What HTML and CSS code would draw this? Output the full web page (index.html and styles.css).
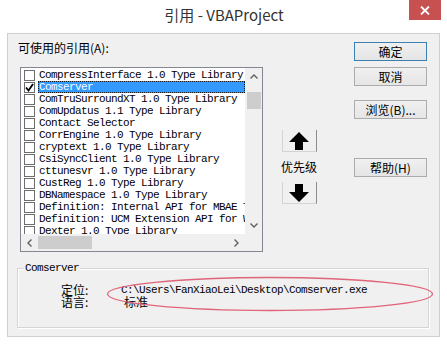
FILE: index.html
```html
<!DOCTYPE html>
<html lang="zh-CN">
<head>
    <meta charset="UTF-8">
    <title>引用 - VBAProject</title>
    <link rel="stylesheet" href="styles.css">
</head>
<body>

<div class="window">
    <div class="titlebar">
        <span></span>
        <div class="title">引用 - VBAProject</div>
        <div class="close">
            <svg width="10" height="9" viewBox="0 0 10 9"><path d="M1 0.5 L9 8.5 M9 0.5 L1 8.5" stroke="#fff" stroke-width="1.8"/></svg>
        </div>
    </div>

    <div class="client">
        <div class="top">
            <div class="refs">
                <div class="label">可使用的引用(A):</div>
                <div class="listbox">
                    <div class="list-body">
                        <div class="rows">
                            <div class="row"><span class="check"></span><span class="name">CompressInterface 1.0 Type Library</span></div>
                            <div class="row selected"><span class="check checked"><svg width="9" height="9" viewBox="0 0 9 9"><path d="M1 4.5 L3.5 7.5 L8 1" fill="none" stroke="#000" stroke-width="1.8"/></svg></span><span class="name">Comserver</span></div>
                            <div class="row"><span class="check"></span><span class="name">ComTruSurroundXT 1.0 Type Library</span></div>
                            <div class="row"><span class="check"></span><span class="name">ComUpdatus 1.1 Type Library</span></div>
                            <div class="row"><span class="check"></span><span class="name">Contact Selector</span></div>
                            <div class="row"><span class="check"></span><span class="name">CorrEngine 1.0 Type Library</span></div>
                            <div class="row"><span class="check"></span><span class="name">cryptext 1.0 Type Library</span></div>
                            <div class="row"><span class="check"></span><span class="name">CsiSyncClient 1.0 Type Library</span></div>
                            <div class="row"><span class="check"></span><span class="name">cttunesvr 1.0 Type Library</span></div>
                            <div class="row"><span class="check"></span><span class="name">CustReg 1.0 Type Library</span></div>
                            <div class="row"><span class="check"></span><span class="name">DBNamespace 1.0 Type Library</span></div>
                            <div class="row"><span class="check"></span><span class="name">Definition: Internal API for MBAE Type Library</span></div>
                            <div class="row"><span class="check"></span><span class="name">Definition: UCM Extension API for Windows</span></div>
                            <div class="row"><span class="check"></span><span class="name">Dexter 1.0 Type Library</span></div>
                        </div>
                        <div class="vscroll">
                            <svg class="chev" width="8" height="5" viewBox="0 0 8 5"><path d="M0.5 4.5 L4 1 L7.5 4.5" fill="none" stroke="#606060" stroke-width="1.4"/></svg>
                            <div class="vthumb"></div>
                            <div class="spacer"></div>
                            <svg class="chev" width="8" height="5" viewBox="0 0 8 5"><path d="M0.5 0.5 L4 4 L7.5 0.5" fill="none" stroke="#606060" stroke-width="1.4"/></svg>
                        </div>
                    </div>
                    <div class="hscroll">
                        <div class="htrack">
                            <svg class="chev" width="5" height="8" viewBox="0 0 5 8"><path d="M4.5 0.5 L1 4 L4.5 7.5" fill="none" stroke="#606060" stroke-width="1.4"/></svg>
                            <div class="hthumb"></div>
                            <div class="spacer"></div>
                            <svg class="chev" width="5" height="8" viewBox="0 0 5 8"><path d="M0.5 0.5 L4 4 L0.5 7.5" fill="none" stroke="#606060" stroke-width="1.4"/></svg>
                        </div>
                        <div class="corner"></div>
                    </div>
                </div>
            </div>

            <div class="priority">
                <div class="move">
                    <svg width="20" height="18" viewBox="0 0 20 18"><polygon points="10,0 20,10 14,10 14,18 6,18 6,10 0,10" fill="#000"/></svg>
                </div>
                <div class="priority-label">优先级</div>
                <div class="move">
                    <svg width="20" height="18" viewBox="0 0 20 18"><polygon points="10,18 20,8 14,8 14,0 6,0 6,8 0,8" fill="#000"/></svg>
                </div>
            </div>

            <div class="buttons">
                <div class="btn default">确定</div>
                <div class="btn">取消</div>
                <div class="btn browse">浏览(B)...</div>
                <div class="btn help">帮助(H)</div>
            </div>
        </div>

        <div class="group">
            <div class="legend">Comserver</div>
            <div class="info">
                <div class="info-row"><span class="key">定位:</span><span class="path">C:\Users\FanXiaoLei\Desktop\Comserver.exe</span></div>
                <div class="info-row"><span class="key">语言:</span><span class="lang">标准</span></div>
            </div>
        </div>

        <svg class="mark" width="328" height="36" viewBox="0 0 328 36">
            <ellipse cx="164" cy="18" rx="162.5" ry="16.5" fill="none" stroke="#e0647a" stroke-width="1.3"/>
        </svg>
    </div>
</div>

</body>
</html>
```

FILE: styles.css
```css
body {
    margin: 0;
    background-color: #fff;
    font-family: "Noto Sans CJK SC", sans-serif;
    font-size: 12px;
    color: #000;
}
.window {
    width: 447px;
    height: 345px;
    display: flex;
    flex-direction: column;
    background-color: #fff;
}
.titlebar {
    height: 33px;
    display: grid;
    grid-template-columns: 1fr auto 1fr;
    padding: 0 6px 0 7px;
}
.title {
    font-size: 15px;
    line-height: 30px;
    color: #333;
}
.close {
    justify-self: end;
    width: 32px;
    height: 20px;
    background-color: #c75050;
    display: flex;
    justify-content: center;
    align-items: center;
}
.client {
    position: relative;
    margin: 0 7px;
    height: 302px;
    border: 1px solid #cfcfcf;
    background-color: #f0f0f0;
}
.top {
    display: flex;
    padding: 7px 0 0 10px;
}
.label {
    line-height: 14px;
    height: 14px;
}
.listbox {
    margin: 12px 0 0 2px;
    width: 241px;
    height: 183px;
    border: 1px solid #828790;
    background-color: #fff;
    display: flex;
    flex-direction: column;
}
.list-body {
    display: flex;
    height: 166px;
}
.rows {
    width: 224px;
    overflow: hidden;
    padding-top: 1px;
}
.row {
    height: 12px;
    display: flex;
    align-items: center;
    white-space: nowrap;
    font-family: "Liberation Mono", "Noto Sans CJK SC", monospace;
    font-size: 11px;
    letter-spacing: -0.6px;
}
.check {
    flex: none;
    width: 9px;
    height: 9px;
    margin: 0 3px 0 3px;
    border: 1px solid #6d6d6d;
    background-color: #fff;
    display: flex;
}
.name {
    height: 12px;
    line-height: 12px;
    padding-left: 1px;
}
.selected .name {
    flex: 1;
    background-color: #3399ff;
    color: #fff;
    outline: 1px dotted #1a1a1a;
    outline-offset: -1px;
}
.vscroll {
    width: 17px;
    background-color: #f0f0f0;
    display: flex;
    flex-direction: column;
    align-items: center;
    padding: 6px 0 6px;
}
.vthumb {
    width: 14px;
    height: 17px;
    margin-top: 13px;
    background-color: #cdcdcd;
}
.spacer {
    flex: 1;
}
.hscroll {
    height: 17px;
    display: flex;
}
.htrack {
    width: 224px;
    background-color: #f0f0f0;
    display: flex;
    align-items: center;
    padding: 0 6px;
    box-sizing: border-box;
}
.hthumb {
    width: 54px;
    height: 13px;
    margin-left: 6px;
    background-color: #cdcdcd;
}
.corner {
    flex: 1;
    background-color: #f0f0f0;
}
.priority {
    width: 36px;
    margin: 89px 0 0 18px;
    display: flex;
    flex-direction: column;
    align-items: center;
}
.move {
    width: 33px;
    height: 19px;
    padding-top: 2px;
    display: flex;
    justify-content: center;
    border-left: 1px solid #d4d4d4;
    border-right: 1px solid #8c8c8c;
    border-bottom: 1px solid #d4d4d4;
}
.priority-label {
    line-height: 30px;
    height: 30px;
}
.buttons {
    width: 73px;
    margin: 1px 0 0 37px;
    display: flex;
    flex-direction: column;
    gap: 6px;
}
.btn {
    height: 17px;
    line-height: 17px;
    text-align: center;
    border: 1px solid #acacac;
    background: linear-gradient(#f0f0f0, #e5e5e5);
}
.btn.default {
    border-color: #3c7fb1;
}
.btn.browse {
    margin-top: 8px;
}
.btn.help {
    margin-top: 33px;
}
.group {
    margin: 16px 0 0 9px;
    width: 410px;
    height: 58px;
    border: 1px solid #d5d5d5;
    box-shadow: inset 1px 1px 0 #fff, 1px 1px 0 #fff;
}
.legend {
    width: fit-content;
    margin: -7px 0 0 6px;
    padding: 0 1px;
    height: 12px;
    line-height: 12px;
    background-color: #f0f0f0;
    font-family: "Liberation Mono", monospace;
    font-size: 11px;
    letter-spacing: -0.6px;
}
.info {
    margin-top: 10px;
    padding-left: 43px;
}
.info-row {
    height: 12px;
    line-height: 12px;
    display: flex;
    align-items: center;
    white-space: nowrap;
}
.key {
    width: 60px;
}
.path {
    font-family: "Liberation Mono", monospace;
    font-size: 11px;
    letter-spacing: -0.6px;
}
.lang {
    margin-left: 3px;
}
.mark {
    position: absolute;
    left: 98px;
    top: 242px;
}
```
